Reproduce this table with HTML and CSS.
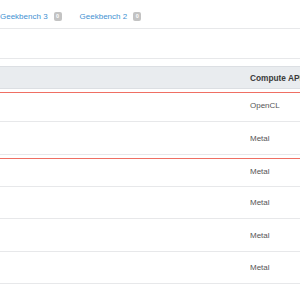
FILE: index.html
```html
<!DOCTYPE html>
<html lang="en">
<head>
    <meta charset="UTF-8">
    <title>Compute Benchmarks</title>
    <link rel="stylesheet" href="styles.css">
</head>
<body>
    <div class="tabs">
        <a class="tab" href="#">Geekbench 3 <span class="badge">0</span></a>
        <a class="tab" href="#">Geekbench 2 <span class="badge">0</span></a>
    </div>
    <div class="filter"></div>
    <div class="table">
        <div class="row head">
            <div class="cell spacer"></div>
            <div class="cell">Compute API</div>
        </div>
        <div class="row marked">
            <div class="cell spacer"></div>
            <div class="cell">OpenCL</div>
        </div>
        <div class="row">
            <div class="cell spacer"></div>
            <div class="cell">Metal</div>
        </div>
        <div class="row marked short">
            <div class="cell spacer"></div>
            <div class="cell">Metal</div>
        </div>
        <div class="row short">
            <div class="cell spacer"></div>
            <div class="cell">Metal</div>
        </div>
        <div class="row">
            <div class="cell spacer"></div>
            <div class="cell">Metal</div>
        </div>
        <div class="row short">
            <div class="cell spacer"></div>
            <div class="cell">Metal</div>
        </div>
    </div>
</body>
</html>
```

FILE: styles.css
```css
:root {
    --link: #3f91d2;
    --line: #e7e8ea;
    --head-bg: #e9ecef;
    --head-line: #dcdfe3;
    --mark: #ef6f63;
    --text: #555;
}
html, body {
    margin: 0;
    padding: 0;
    background: #fff;
    font-family: 'Liberation Sans', Arial, sans-serif;
    overflow: hidden;
}
.tabs {
    display: flex;
    align-items: center;
    gap: 18px;
    height: 29px;
    padding-top: 5px;
    box-sizing: border-box;
    border-bottom: 1px solid var(--line);
}
.tab {
    display: flex;
    align-items: center;
    gap: 6px;
    color: var(--link);
    font-size: 8px;
    text-decoration: none;
    white-space: nowrap;
}
.badge {
    display: inline-block;
    width: 8px;
    height: 9px;
    line-height: 9px;
    border-radius: 2px;
    background: #c3c3c3;
    color: #fff;
    font-size: 5.5px;
    font-weight: 700;
    text-align: center;
}
.filter {
    height: 30px;
    box-sizing: border-box;
    border-bottom: 1px solid var(--line);
    margin-bottom: 7px;
}
.table {
    width: 100%;
}
.row {
    display: flex;
    align-items: center;
    height: 33px;
    box-sizing: border-box;
    border-bottom: 1px solid var(--line);
    color: var(--text);
    font-size: 8px;
}
.row.short {
    height: 32px;
}
/* rows whose top carries the red marker line */
.row.marked {
    margin-top: 3px;
    height: 30px;
    padding-bottom: 3px;
    border-top: 1px solid var(--mark);
}
.row.marked.short {
    height: 29px;
}
.row.head {
    height: 23px;
    background: var(--head-bg);
    border-top: 1px solid var(--head-line);
    border-bottom: 1px solid var(--head-line);
    color: #3a3a3a;
    font-size: 8.3px;
    font-weight: 700;
}
.cell {
    white-space: nowrap;
}
.spacer {
    flex: 0 0 250px;
}
```
